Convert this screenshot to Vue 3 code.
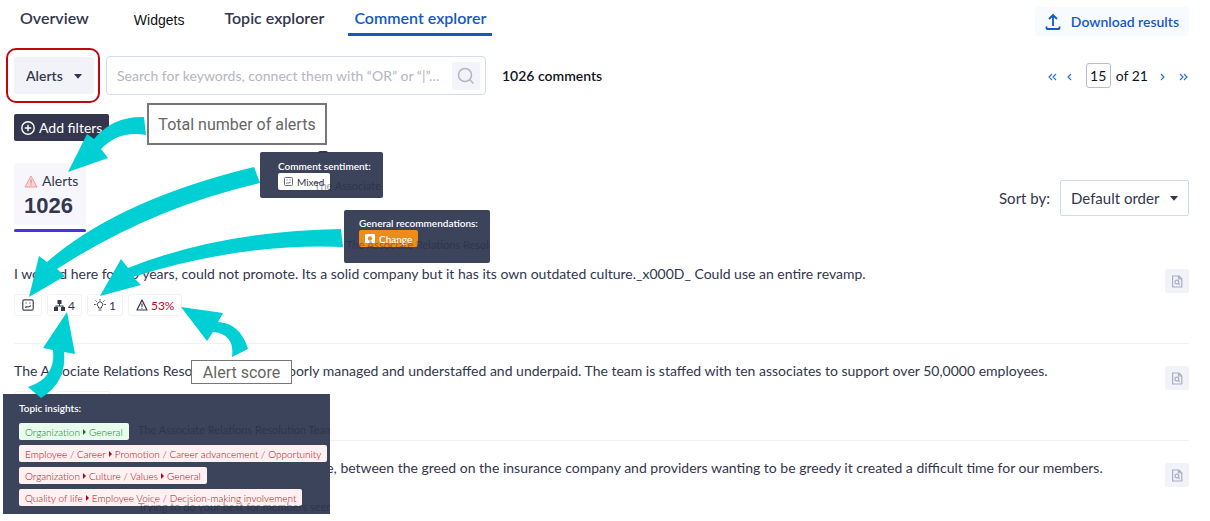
<script setup>
import { ref } from 'vue'

const search = ref('')
const page = ref('15')
const tabs = [
  { label: 'Overview' },
  { label: 'Widgets', plain: true },
  { label: 'Topic explorer' },
  { label: 'Comment explorer', active: true },
]
const comments = [
  {
    text: 'I worked here for 10 years, could not promote. Its a solid company but it has its own outdated culture._x000D_ Could use an entire revamp.',
    mood: true, topics: 4, ideas: 1, score: '53%',
  },
  {
    text: 'The Associate Relations Resolution Team is poorly managed and understaffed and underpaid. The team is staffed with ten associates to support over 50,0000 employees.',
    topics: 2, score: '51%',
  },
  {
    text: 'Trying to do your best for members seem impossible, between the greed on the insurance company and providers wanting to be greedy it created a difficult time for our members.',
  },
]
const topics = [
  { path: ['Organization', 'General'], good: true },
  { path: ['Employee / Career', 'Promotion / Career advancement / Opportunity'] },
  { path: ['Organization', 'Culture / Values', 'General'] },
  { path: ['Quality of life', 'Employee Voice / Decision-making involvement'] },
]
</script>

<template>
  <div class="page">
    <header class="top">
      <nav class="tabs">
        <a v-for="t in tabs" :key="t.label" href="#" class="tab" :class="{ active: t.active, plain: t.plain }">{{ t.label }}</a>
      </nav>
      <button class="download">
        <svg width="16" height="18" viewBox="0 0 16 18" fill="none" stroke="#1259c3" stroke-width="1.8">
          <path d="M8 13V2M4 6l4-4 4 4M1.500 13.500v1.500q0 1 1 1h11q1 0 1-1v-1.500" />
        </svg>
        Download results
      </button>
    </header>

    <section class="toolbar">
      <div class="scope">
        <select class="scope-select" aria-label="Comment scope"><option>Alerts</option></select>
        <svg class="caret" width="8" height="5" viewBox="0 0 8 5"><path d="M0 0h8L4.500 4.200q-.5.500-1 0z" fill="#33364d" /></svg>
      </div>
      <div class="search">
        <input v-model="search" type="text" aria-label="Search comments" placeholder="Search for keywords, connect them with “OR” or “|”…" />
        <button class="search-btn" aria-label="Search">
          <svg width="18" height="18" viewBox="0 0 18 18" fill="none" stroke="#b4b6bf" stroke-width="1.500">
            <circle cx="8" cy="8" r="6.500" /><path d="M12.500 12.500l4 4" />
          </svg>
        </button>
      </div>
      <strong class="count">1026 comments</strong>
      <nav class="pager" aria-label="Pages">
        <button aria-label="First page"><svg width="9" height="8" viewBox="0 0 9 8"><path d="M4 1L1 4l3 3M8 1L5 4l3 3" /></svg></button>
        <button aria-label="Previous page"><svg width="5" height="8" viewBox="0 0 5 8"><path d="M4 1L1 4l3 3" /></svg></button>
        <input v-model="page" class="page-no" type="text" aria-label="Page number" />
        <span class="of">of 21</span>
        <button aria-label="Next page"><svg width="5" height="8" viewBox="0 0 5 8"><path d="M1 1l3 3-3 3" /></svg></button>
        <button aria-label="Last page"><svg width="9" height="8" viewBox="0 0 9 8"><path d="M1 1l3 3-3 3M5 1l3 3-3 3" /></svg></button>
      </nav>
    </section>

    <button class="add">
      <svg width="14" height="14" viewBox="0 0 14 14" fill="none" stroke="#fff" stroke-width="1.400">
        <circle cx="7" cy="7" r="6.200" /><path d="M7 3.800v6.400M3.800 7h6.400" />
      </svg>
      Add filters
    </button>

    <section class="summary">
      <div class="stat">
        <div class="card">
          <div class="card-label">
            <svg width="14" height="13" viewBox="0 0 14 13" fill="#fbd5d5" stroke="#ee9a9a" stroke-linejoin="round">
              <path d="M7 1l6 11H1z" /><path d="M7 4.500v4M7 9.500v1" stroke="#e06c6c" />
            </svg>
            Alerts
          </div>
          <div class="card-value">1026</div>
        </div>
        <div class="bar"></div>
      </div>
      <div class="sort">
        <label for="sort">Sort by:</label>
        <div class="sort-box">
          <select id="sort"><option>Default order</option></select>
          <svg class="caret" width="8" height="5" viewBox="0 0 8 5"><path d="M0 0h8L4.500 4.200q-.5.500-1 0z" fill="#33364d" /></svg>
        </div>
      </div>
    </section>

    <main>
      <article v-for="(c, i) in comments" :key="i" class="comment">
        <div class="body">
          <p>{{ c.text }}</p>
          <div class="chips">
            <span v-if="c.mood" class="chip">
              <svg width="12" height="12" viewBox="0 0 12 12" fill="none" stroke="#41445c" stroke-width="1.200">
                <rect x=".8" y=".8" width="10.400" height="10.400" rx="1.500" /><path d="M3.500 4h1.200M7.300 4h1.200M3 8.300l2-.5 1.500.2L9 6.800" />
              </svg>
            </span>
            <span v-if="c.topics" class="chip">
              <svg width="11" height="11" viewBox="0 0 11 11" fill="#33364d">
                <path d="M3.500 0h4v4h-4zM0 7h4v4H0zM7 7h4v4H7zM5 4h1v1.500h3.500V7h-1v-.5h-6V7h-1V5.500H5z" />
              </svg>
              {{ c.topics }}
            </span>
            <span v-if="c.ideas" class="chip">
              <svg width="12" height="12" viewBox="0 0 12 12" fill="none" stroke="#41445c">
                <path d="M4.500 9V7.800a2.700 2.700 0 1 1 3 0V9zM4.600 11h2.800M6 0v1.500M1.500 1.500l1.200 1.200M10.500 1.500L9.300 2.700M0 5.500h1.700M10.300 5.500H12" />
              </svg>
              {{ c.ideas }}
            </span>
            <span v-if="c.score" class="chip score">
              <svg width="12" height="12" viewBox="0 0 12 12" fill="none" stroke="#33364d" stroke-linejoin="round">
                <path d="M6 1l5 10H1zM6 4.500v3.200M6 8.700v1" stroke-width="1.200" />
              </svg>
              {{ c.score }}
            </span>
          </div>
        </div>
        <button class="view" aria-label="View comment">
          <svg width="12" height="13" viewBox="0 0 12 13" fill="none" stroke="#aaacc4" stroke-width="1.200">
            <path d="M1.600 1h6.400l2.800 2.800v8.200H1.600zM7.500 1v3h3" /><circle cx="5.900" cy="7" r="1.900" /><path d="M7.300 8.400l1.400 1.600" />
          </svg>
        </button>
      </article>
    </main>

    <div class="highlight"></div>

    <aside class="pop pop-sentiment">
      <b>Comment sentiment:</b>
      <span class="tag neutral">
        <svg width="9" height="9" viewBox="0 0 9 9" fill="none" stroke="#6a6c82">
          <rect x=".5" y=".5" width="8" height="8" rx="1" /><path d="M2.500 3h1M5.500 3h1M2.200 6.300l1.600-.4 1 .1 2-.9" />
        </svg>
        Mixed
      </span>
      <span class="ghost">The Associate</span>
    </aside>
    <div class="nub"></div>

    <aside class="pop pop-change">
      <b>General recommendations:</b>
      <span class="tag orange">
        <svg width="10" height="9" viewBox="0 0 10 9"><rect width="10" height="9" rx="1" fill="#fff" /><circle cx="5" cy="4.500" r="2.200" fill="#ee8c1a" /></svg>
        Change
      </span>
      <span class="ghost">The Associate Relations Resolution</span>
    </aside>

    <aside class="pop pop-topics">
      <b>Topic insights:</b>
      <span v-for="(t, i) in topics" :key="i" class="tag" :class="t.good ? 'good' : 'bad'">
        <template v-for="(p, k) in t.path" :key="k">
          <svg v-if="k" class="step" width="3" height="6" viewBox="0 0 3 6"><path d="M0 0l3 3-3 3z" fill="currentColor" /></svg>
          <span>{{ p }}</span>
        </template>
      </span>
      <span class="ghost one">The Associate Relations Resolution Team</span>
      <span class="ghost two">Trying to do your best for members seem</span>
    </aside>

    <svg class="arrows" width="400" height="420" viewBox="0 0 400 420" fill="#00cfd3" aria-hidden="true">
      <path d="M68 172L87 134L94 139Q113 116 144 117L146 135Q119 130 101 149L108 158Z" />
      <path d="M29 297L39 256L47 262Q118 200 254 167L260 183Q151 208 57 269L65 276Z" />
      <path d="M100 296L121 259L128 268Q220 231 341 229L343 247Q240 243 133 277L141 285Z" />
      <path d="M67 312L43 348L53 350Q56 378 28 387L41 398Q67 382 64 352L75 354Z" />
      <path d="M181 307L223 313L218 322Q240 323 248 349L232 357Q235 334 213 332L207 341Z" />
    </svg>

    <div class="callout total">Total number of alerts</div>
    <div class="callout score-note">Alert score</div>
  </div>
</template>

<style>
body { margin: 0; background: #fff; }
</style>

<style scoped>
* { box-sizing: border-box; }
.page {
  position: relative;
  padding: 7px 21px 0 14px;
  overflow: hidden;
  font-family: Lato, "Liberation Sans", sans-serif;
  font-size: 14px;
  color: #33364d;
}
button, input, select { font: inherit; color: inherit; margin: 0; }
button { border: 0; padding: 0; background: none; display: flex; align-items: center; justify-content: center; cursor: pointer; }
select { appearance: none; cursor: pointer; outline: 0; }

.top { display: flex; justify-content: space-between; align-items: flex-start; }
.tabs { display: flex; gap: 18px; }
.tab {
  height: 29px;
  padding: 0 6px;
  border-bottom: 3px solid transparent;
  font-size: 16px;
  line-height: 22px;
  font-weight: 600;
  color: #33364d;
  text-decoration: none;
}
.tab.plain { margin: 0 10px 0 15px; font-family: "Liberation Sans", sans-serif; font-weight: 400; font-size: 14px; line-height: 26px; color: #111; }
.tab.active { color: #1259c3; border-color: #1259c3; }
.download {
  height: 29px;
  padding: 0 10px;
  gap: 10px;
  border-radius: 3px;
  background: #f7fbff;
  color: #1259c3;
  font-weight: 600;
}

.toolbar { display: flex; align-items: center; height: 39px; margin-top: 20px; }
.scope { position: relative; margin-right: 12px; }
.scope-select { width: 80px; height: 37px; padding: 0 12px; border: 0; border-radius: 3px; background: #f2f3f9; font-weight: 600; }
.caret { position: absolute; right: 12px; top: 50%; margin-top: -2px; pointer-events: none; }
.search {
  display: flex;
  align-items: center;
  width: 380px;
  height: 39px;
  padding: 0 5px 0 10px;
  border: 1px solid #d3dcea;
  border-radius: 4px;
}
.search input { flex: 1; min-width: 0; border: 0; padding: 0; outline: 0; background: none; }
.search input::placeholder { color: #b4b6bf; opacity: 1; }
.search-btn { width: 28px; height: 28px; border-radius: 2px; background: #f3f4fa; }
.count { margin-left: 16px; color: #111320; font-weight: 600; }
.pager { display: flex; align-items: center; margin-left: auto; color: #111320; }
.pager svg { display: block; fill: none; stroke: #2f74cf; stroke-width: 1.200; }
.pager button { padding: 2px 1px 0; margin-left: 8px; }
.page-no { width: 25px; height: 25px; margin-left: 13px; padding: 0; border: 1px solid #b9bccb; border-radius: 3px; text-align: center; }
.of { margin: 0 3px 0 5px; }
.pager button:last-child { margin-left: 12px; }

.add { height: 27px; margin-top: 19px; padding: 0 7px; gap: 4px; border-radius: 2px; background: #33364d; color: #fff; }

.summary { display: flex; justify-content: space-between; align-items: flex-start; margin-top: 22px; }
.card { height: 62px; padding: 8px 8px 0 10px; border-radius: 4px; background: #f6f6fc; }
.card-label { display: flex; align-items: center; gap: 4px; line-height: 20px; }
.card-value { font: 700 22px/30px "Liberation Sans", sans-serif; }
.bar { height: 3px; margin-top: 4px; border-radius: 2px; background: #4534dc; }
.sort { display: flex; align-items: center; gap: 10px; margin-top: 17px; font-size: 15px; }
.sort-box { position: relative; }
.sort-box select { width: 129px; height: 36px; padding: 0 10px; border: 1px solid #cbdcec; border-radius: 2px; background: #fff; }
.sort-box .caret { right: 11px; }

main { margin-top: 15px; }
.comment { display: flex; justify-content: space-between; align-items: flex-start; height: 97px; border-bottom: 1px solid #f1f2f4; }
.comment:last-child { border-bottom: 0; height: 80px; }
.comment p { margin: 17px 0 0; line-height: 20px; white-space: nowrap; }
.view { width: 24px; height: 24px; margin-top: 22px; border-radius: 2px; background: #f2f3f8; flex: none; }
.chips { display: flex; gap: 5px; margin-top: 10px; }
.chip {
  display: flex;
  align-items: center;
  gap: 3px;
  height: 22px;
  padding: 0 6px;
  border: 1px solid #f1f2fa;
  border-radius: 3px;
  font-size: 12px;
  color: #33364d;
}
.chip:first-child { padding: 0 7px; }
.chip.score { color: #c00418; padding: 0 7px; }

.highlight { position: absolute; left: 6px; top: 48px; width: 94px; height: 55px; border: 2px solid #be0712; border-radius: 10px; }

.pop {
  position: absolute;
  display: flex;
  flex-direction: column;
  align-items: flex-start;
  border-radius: 2px;
  background: #3c445c;
  overflow: hidden;
  font-size: 10px;
}
.pop b { color: #fff; font-weight: 600; line-height: 12px; white-space: nowrap; }
.pop-sentiment { left: 260px; top: 152px; width: 123px; height: 46px; padding: 8px 18px; gap: 1px; }
.pop-change { left: 344px; top: 210px; width: 146px; height: 53px; padding: 7px 15px; gap: 1px; }
.pop-topics { left: 3px; top: 394px; width: 327px; height: 120px; padding: 8px 16px; gap: 5px; border-radius: 0; }
.pop-topics b { margin-bottom: 4px; }
.nub { position: absolute; left: 318px; top: 151px; width: 10px; height: 2px; border-radius: 2px 2px 0 0; background: #33364d; }
.tag { display: flex; align-items: center; height: 17px; padding: 0 6px; border-radius: 2px; white-space: nowrap; }
.tag.neutral { background: #fff; gap: 4px; height: 18px; color: #33364d; }
.tag.orange { background: #ee8c1a; gap: 4px; color: #fff; font-weight: 500; }
.tag.good { background: #e8fdee; color: #0a7d1d; font-weight: 300; }
.tag.bad { background: #fff1f1; color: #b80014; font-weight: 300; }
.step { margin: 0 3px; }
.ghost { position: absolute; color: #1d2338; opacity: .45; font-size: 11px; line-height: 14px; white-space: nowrap; }
.pop-sentiment .ghost { left: 54px; top: 27px; }
.pop-change .ghost { left: 2px; top: 28px; }
.ghost.one { left: 135px; top: 29px; }
.ghost.two { left: 135px; top: 106px; }

.arrows { position: absolute; left: 0; top: 0; pointer-events: none; }
.callout {
  position: absolute;
  display: flex;
  align-items: center;
  justify-content: center;
  border: 1px solid #777;
  background: #fff;
  color: #666;
  font-family: Roboto, sans-serif;
  font-size: 16px;
  white-space: nowrap;
}
.total { left: 147px; top: 103px; width: 180px; height: 42px; border-width: 2px; }
.score-note { left: 191px; top: 360px; width: 101px; height: 24px; }
</style>
